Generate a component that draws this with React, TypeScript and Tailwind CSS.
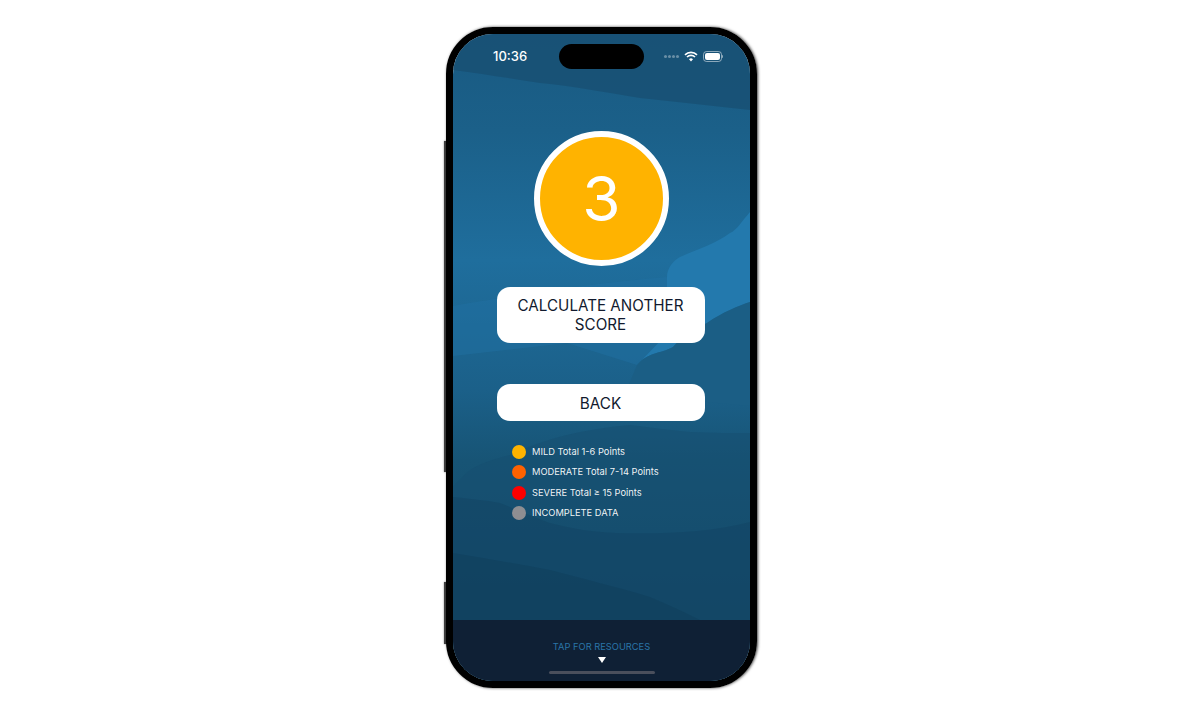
const FONT = "font-['Inter','Liberation_Sans',sans-serif]";

const legend = [
  { color: "bg-[#ffb300]", label: "MILD Total 1-6 Points" },
  { color: "bg-[#ff6200]", label: "MODERATE Total 7-14 Points" },
  { color: "bg-[#fe0000]", label: "SEVERE Total ≥ 15 Points" },
  { color: "bg-[#8e8e92]", label: "INCOMPLETE DATA" },
];

function Background() {
  return (
    <svg className="absolute inset-0 h-full w-full" viewBox="0 0 297 647" preserveAspectRatio="none">
      <defs>
        <linearGradient id="base" x1="0" y1="0" x2="0" y2="1">
          <stop offset="0" stopColor="#195a82" />
          <stop offset="0.15" stopColor="#1b6089" />
          <stop offset="0.35" stopColor="#1f6e9d" />
          <stop offset="0.55" stopColor="#1b6089" />
          <stop offset="0.66" stopColor="#175475" />
          <stop offset="1" stopColor="#114460" />
        </linearGradient>
      </defs>
      <rect width="297" height="647" fill="url(#base)" />
      <path d="M0 0H297V76C260 72 225 68 187 64C150 58 120 52 87 49C55 44 30 40 0 36Z" fill="#184f72" opacity="0.75" />
      <path d="M0 272C60 262 130 250 214 243V320L184 331L114 309L0 322Z" fill="#2272a5" opacity="0.45" />
      <path d="M297 178C288 188 284 196 277 199C262 210 245 215 227 223C218 228 214 236 214 243V300L184 331C195 318 207 320 220 313C232 300 240 296 254 289C270 278 285 272 297 268Z" fill="#2379ad" />
      <path d="M297 268C285 272 270 278 254 289C240 296 232 300 220 313C207 320 195 318 184 331C178 345 176 352 170 360L297 372Z" fill="#1b5e85" />
      <path d="M0 453C5 448 10 442 17 436C30 428 45 424 57 421C90 405 130 395 177 391C200 394 218 396 237 398C260 399 280 399 297 399V647H0Z" fill="#154e70" opacity="0.5" />
      <path d="M0 463C16 465 32 466 47 469C65 476 80 483 97 489C120 495 140 498 163 499C210 500 255 499 297 488V647H0Z" fill="#114361" opacity="0.45" />
      <path d="M0 519C32 524 65 530 97 536C130 545 165 553 197 563C215 571 232 578 247 586H0Z" fill="#0f3c58" opacity="0.4" />
    </svg>
  );
}

function StatusIcons() {
  return (
    <div className="flex items-center">
      <div className="mr-[5px] flex gap-[1.5px]">
        {[0, 1, 2, 3].map((i) => (
          <span key={i} className="h-[2.5px] w-[2.5px] rounded-full bg-white/35" />
        ))}
      </div>
      <svg width="14" height="11" viewBox="0 0 14 11" className="mr-[5px]">
        <path d="M7 10.5 5 8.2a3 3 0 0 1 4 0Z" fill="#fff" />
        <path d="M1 3.8a8.6 8.6 0 0 1 12 0M3 6a5.8 5.8 0 0 1 8 0" stroke="#fff" strokeWidth="1.7" fill="none" />
      </svg>
      <div className="flex h-[11px] w-[19px] items-center justify-center rounded-[3.5px] border border-white/50">
        <div className="h-[7px] w-[15px] rounded-[2px] bg-white" />
      </div>
      <div className="ml-[0.5px] h-[3px] w-[1px] rounded-r-full bg-white/50" />
    </div>
  );
}

export default function App() {
  return (
    <div className={`flex h-[715px] w-[1200px] justify-center overflow-hidden bg-white pt-[27px] pl-[3px] ${FONT}`}>
      <div className="relative h-[661px] w-[311px] rounded-[47px] border-[7px] border-black shadow-[1px_0_3px_rgba(0,0,0,0.75)]">
        <div className="absolute top-[107px] -left-[9px] h-[331px] w-[3px] bg-black/75 shadow-[0_0_2px_rgba(0,0,0,0.5)]" />
        <div className="absolute top-[548px] -left-[9px] h-[62px] w-[3px] bg-black/75 shadow-[0_0_2px_rgba(0,0,0,0.5)]" />
        <div className="relative flex h-full w-full flex-col overflow-hidden rounded-[40px]">
          <Background />
          <div className="relative flex flex-1 flex-col items-center pr-[2px]">
            <div className="flex h-[45px] w-full items-center justify-between pr-[25px] pl-[40px]">
              <span className="text-[13px] font-medium text-white">10:36</span>
              <StatusIcons />
            </div>
            <div className="absolute top-[10px] left-[106px] h-[25px] w-[85px] rounded-full bg-black" />
            <div className="mt-[52px] ml-[2px] flex h-[135px] w-[135px] items-center justify-center rounded-full border-[6px] border-white bg-[#ffb300] text-[62px] font-normal text-white">
              3
            </div>
            <button className="mt-[21px] h-[56px] w-[208px] rounded-[13px] bg-white px-4 text-[15.2px] leading-[19px] text-[#111a2e]">
              CALCULATE ANOTHER SCORE
            </button>
            <button className="mt-[41px] h-[37px] w-[208px] rounded-[13px] bg-white pt-[3px] text-[15.3px] text-[#111a2e]">
              BACK
            </button>
            <ul className="mt-[24px] flex w-full flex-col gap-[6.4px] pl-[59px]">
              {legend.map((l) => (
                <li key={l.label} className="flex h-[14px] items-center gap-[6px]">
                  <span className={`h-[14px] w-[14px] rounded-full ${l.color}`} />
                  <span className="text-[9.3px] text-white/95">{l.label}</span>
                </li>
              ))}
            </ul>
          </div>
          <div className="relative flex h-[61px] flex-col items-center bg-[#0f2035] pt-[21px]">
            <span className="text-[9.3px] leading-[12px] text-[#2a75a8]">TAP FOR RESOURCES</span>
            <span className="mt-[4px] h-0 w-0 border-x-4 border-t-[6px] border-x-transparent border-t-white" />
            <span className="mt-[8px] h-[3px] w-[106px] rounded-full bg-[#4a4f5c]" />
          </div>
        </div>
      </div>
    </div>
  );
}
